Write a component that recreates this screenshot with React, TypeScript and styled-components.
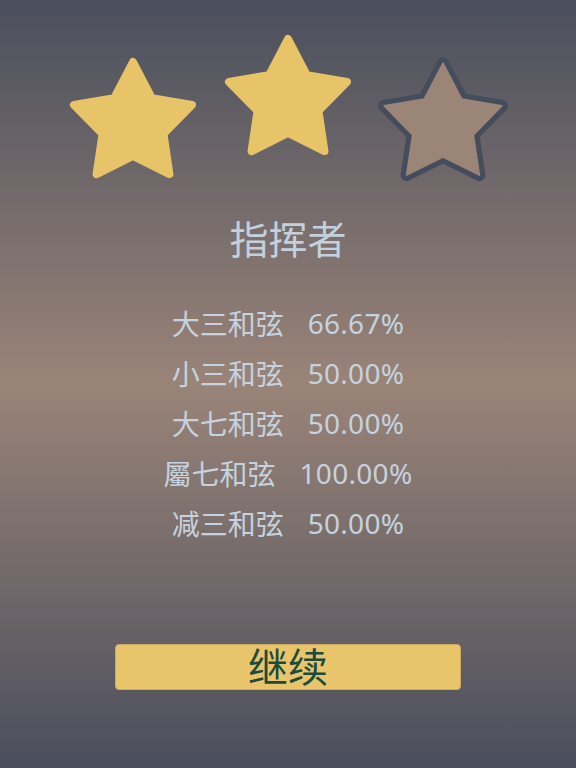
import React from "react";
import styled, { createGlobalStyle } from "styled-components";

const GlobalStyle = createGlobalStyle`
  html, body { margin: 0; padding: 0; }
  body { font-family: "Noto Sans", "Noto Sans CJK SC", sans-serif; }
`;

const Screen = styled.div`
  width: 576px;
  height: 768px;
  display: flex;
  flex-direction: column;
  align-items: center;
  background: linear-gradient(
    to bottom,
    #4a4f5d 0%,
    #9a8478 50%,
    #4a4e5c 100%
  );
  overflow: hidden;
`;

const StarRow = styled.div`
  display: flex;
  justify-content: center;
  gap: 15px;
  padding-top: 31px;
`;

const StarSvg = styled.svg<{ $offset: number }>`
  display: block;
  width: 140px;
  height: 130px;
  margin-top: ${(p) => p.$offset}px;
`;

const Title = styled.h1`
  margin: 31px 0 0;
  font-family: "Noto Sans", "Noto Sans CJK SC", sans-serif;
  font-weight: 400;
  font-size: 39px;
  line-height: 48px;
  color: #c4d0dd;
  text-align: center;
`;

const Stats = styled.div`
  margin-top: 35px;
  display: flex;
  flex-direction: column;
`;

const StatRow = styled.div`
  display: flex;
  justify-content: center;
  align-items: center;
  gap: 24px;
  height: 50px;
  font-size: 28px;
  color: #c6d2df;
`;

const Value = styled.span`
  letter-spacing: 0.3px;
`;

const Button = styled.button`
  margin-top: 96px;
  width: 346px;
  height: 46px;
  padding: 0;
  border: 1px solid #c9ab62;
  border-radius: 4px;
  background: #e8c56b;
  color: #1c4a3d;
  font-family: "Noto Sans", "Noto Sans CJK SC", sans-serif;
  font-size: 40px;
  line-height: 44px;
  display: flex;
  align-items: center;
  justify-content: center;
  cursor: pointer;
`;

function starPoints(cx: number, cy: number, R: number, r: number): string {
  const pts: string[] = [];
  for (let i = 0; i < 10; i++) {
    const rad = i % 2 === 0 ? R : r;
    const a = (-90 + i * 36) * (Math.PI / 180);
    pts.push(`${(cx + rad * Math.cos(a)).toFixed(2)},${(cy + rad * Math.sin(a)).toFixed(2)}`);
  }
  return pts.join(" ");
}

const Star: React.FC<{ filled: boolean; offset: number }> = ({ filled, offset }) => (
  <StarSvg $offset={offset} viewBox="0 0 140 130">
    {filled ? (
      <polygon
        points={starPoints(70, 70, 62, 32)}
        fill="#e8c468"
        stroke="#e8c468"
        strokeWidth={8}
        strokeLinejoin="round"
      />
    ) : (
      <>
        <polygon
          points={starPoints(70, 71, 62, 32)}
          fill="#454c5b"
          stroke="#454c5b"
          strokeWidth={12}
          strokeLinejoin="round"
        />
        <polygon
          points={starPoints(70, 71, 62, 32)}
          fill="#9a8577"
          stroke="#9a8577"
          strokeWidth={1.5}
          strokeLinejoin="round"
        />
      </>
    )}
  </StarSvg>
);

const stats = [
  { label: "大三和弦", value: "66.67%" },
  { label: "小三和弦", value: "50.00%" },
  { label: "大七和弦", value: "50.00%" },
  { label: "屬七和弦", value: "100.00%" },
  { label: "减三和弦", value: "50.00%" },
];

export default function App() {
  return (
    <>
      <GlobalStyle />
      <Screen>
        <StarRow>
          <Star filled offset={23} />
          <Star filled offset={0} />
          <Star filled={false} offset={23} />
        </StarRow>
        <Title>指挥者</Title>
        <Stats>
          {stats.map((s) => (
            <StatRow key={s.label}>
              <span>{s.label}</span>
              <Value>{s.value}</Value>
            </StatRow>
          ))}
        </Stats>
        <Button>继续</Button>
      </Screen>
    </>
  );
}
